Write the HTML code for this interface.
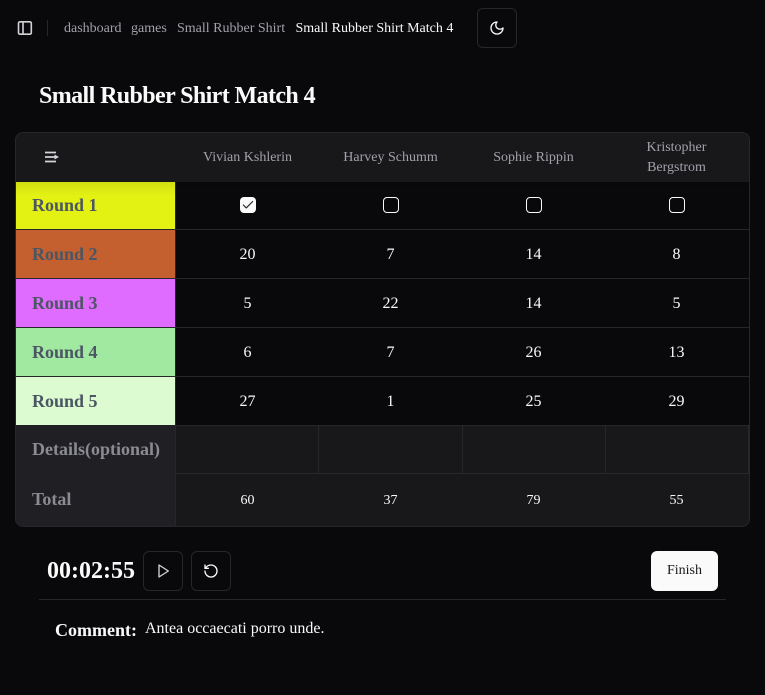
<!DOCTYPE html>
<html lang="en">
<head>
<meta charset="utf-8">
<title>Small Rubber Shirt Match 4</title>
<style>
html,body{margin:0;padding:0;background:#09090b;}
body{width:765px;height:695px;position:relative;overflow:hidden;font-family:"Liberation Serif",serif;color:#fafafa;}
.a{position:absolute;white-space:nowrap;}
.crumb{font-size:14px;line-height:20px;top:19px;color:#a1a1aa;}
.btn{position:absolute;box-sizing:border-box;width:40px;height:40px;border:1px solid #27272a;border-radius:6px;background:#09090b;}
.btn svg{position:absolute;left:11px;top:11px;}
.wrap{position:absolute;left:15px;top:132px;width:735px;height:395px;box-sizing:border-box;border:1px solid #27272a;border-radius:8px;overflow:hidden;background:#18181b;}
.r{position:absolute;left:0;width:733px;}
.lab{position:absolute;left:0;width:159px;height:100%;border-right:1px solid #27272a;box-sizing:content-box;font-weight:bold;font-size:18px;color:#4b5563;}
.lab span{position:absolute;left:16px;white-space:nowrap;}
.body{position:absolute;left:160px;right:0;top:0;height:100%;background:#09090b;}
.line{position:absolute;left:160px;right:0;height:1px;background:#27272a;}
.bl{position:absolute;left:0;width:160px;height:1px;background:#27272a;}
.num{position:absolute;font-size:16px;line-height:24px;text-align:center;width:60px;margin-left:-30px;}
.tot{position:absolute;font-size:14px;line-height:20px;text-align:center;width:60px;margin-left:-30px;}
.head{position:absolute;font-size:14px;line-height:20px;text-align:center;color:#a1a1aa;width:130px;margin-left:-65px;}
.cb{position:absolute;box-sizing:border-box;width:16px;height:16px;border:1px solid #fafafa;border-radius:4px;margin-left:-8px;}
.vs{position:absolute;width:1px;background:#27272a;top:293px;height:47px;}
.shade{position:absolute;left:0;right:0;top:49px;height:14px;background:linear-gradient(to bottom,rgba(0,0,0,.08),rgba(0,0,0,0));}
</style>
</head>
<body>
<svg class="a" style="left:17px;top:20px" width="16" height="16" viewBox="0 0 16 16" fill="none" stroke="#d4d4d8" stroke-width="1.600" stroke-linejoin="round"><rect x="1.500" y="1.800" width="12.800" height="12.400" rx="1.500"/><path d="M6 2v12"/></svg>
<div class="a" style="left:46.5px;top:20px;width:1px;height:16px;background:#27272a"></div>
<div class="a crumb" style="left:64px">dashboard</div>
<div class="a crumb" style="left:131px">games</div>
<div class="a crumb" style="left:177px">Small Rubber Shirt</div>
<div class="a crumb" style="left:295.500px;color:#fafafa">Small Rubber Shirt Match 4</div>
<div class="btn" style="left:477px;top:8px"><svg width="16" height="16" viewBox="0 0 24 24" fill="none" stroke="#fafafa" stroke-width="2" stroke-linecap="round" stroke-linejoin="round"><path d="M12 3a6 6 0 0 0 9 9 9 9 0 1 1-9-9Z"/></svg></div>

<div class="a" style="left:39px;top:82px;font-size:24px;line-height:28px;font-weight:bold;letter-spacing:-.6px">Small Rubber Shirt Match 4</div>

<div class="wrap">
  <svg class="a" style="left:28px;top:16px" width="16" height="16" viewBox="0 0 16 16" fill="none" stroke="#d4d4d8" stroke-width="1.700"><path d="M1 3.500h11M1 8h9.500M1 12.500h11"/><path d="M10.500 5.500 15 8l-4.500 2.500z" fill="#d4d4d8" stroke="none"/></svg>
  <div class="head" style="left:231.500px;top:15px">Vivian Kshlerin</div>
  <div class="head" style="left:374.500px;top:15px">Harvey Schumm</div>
  <div class="head" style="left:517.500px;top:15px">Sophie Rippin</div>
  <div class="head" style="left:660.500px;top:5px">Kristopher<br>Bergstrom</div>

  <div class="r" style="top:49px;height:48px"><div class="body"></div><div class="lab" style="background:#e3f213"><span style="top:13px">Round 1</span></div></div>
  <div class="r" style="top:97px;height:48px"><div class="body"></div><div class="lab" style="background:#c46030"><span style="top:14px">Round 2</span></div></div>
  <div class="r" style="top:146px;height:48px"><div class="body"></div><div class="lab" style="background:#e06bff"><span style="top:14px">Round 3</span></div></div>
  <div class="r" style="top:195px;height:48px"><div class="body"></div><div class="lab" style="background:#a1e8a1"><span style="top:14px">Round 4</span></div></div>
  <div class="r" style="top:244px;height:48px"><div class="body"></div><div class="lab" style="background:#dcfbd0"><span style="top:14px">Round 5</span></div></div>
  <div class="shade"></div>

  <div class="bl" style="top:96px"></div><div class="bl" style="top:145px"></div><div class="bl" style="top:194px"></div><div class="bl" style="top:243px"></div>
  <div class="line" style="top:96px"></div><div class="line" style="top:145px"></div><div class="line" style="top:194px"></div><div class="line" style="top:243px"></div><div class="line" style="top:292px"></div><div class="line" style="top:340px"></div>

  <div class="a" style="left:0;top:292px;width:159px;height:101px;background:#1f1f24;border-right:1px solid #27272a;font-weight:bold;font-size:18px;color:#8b8b92">
    <span class="a" style="left:16px;top:14px">Details(optional)</span>
    <span class="a" style="left:16px;top:64px">Total</span>
  </div>

  <div class="cb" style="left:231.500px;top:64px;background:#fafafa"><svg style="position:absolute;left:0;top:0" width="14" height="14" viewBox="0 0 24 24" fill="none" stroke="#27272a" stroke-width="2" stroke-linecap="round" stroke-linejoin="round"><path d="M20 6 9 17l-5-5"/></svg></div>
  <div class="cb" style="left:374.500px;top:64px"></div>
  <div class="cb" style="left:517.500px;top:64px"></div>
  <div class="cb" style="left:660.500px;top:64px"></div>

  <div class="num" style="left:231.500px;top:110px">20</div><div class="num" style="left:374.500px;top:110px">7</div><div class="num" style="left:517.500px;top:110px">14</div><div class="num" style="left:660.500px;top:110px">8</div>
  <div class="num" style="left:231.500px;top:159px">5</div><div class="num" style="left:374.500px;top:159px">22</div><div class="num" style="left:517.500px;top:159px">14</div><div class="num" style="left:660.500px;top:159px">5</div>
  <div class="num" style="left:231.500px;top:208px">6</div><div class="num" style="left:374.500px;top:208px">7</div><div class="num" style="left:517.500px;top:208px">26</div><div class="num" style="left:660.500px;top:208px">13</div>
  <div class="num" style="left:231.500px;top:257px">27</div><div class="num" style="left:374.500px;top:257px">1</div><div class="num" style="left:517.500px;top:257px">25</div><div class="num" style="left:660.500px;top:257px">29</div>

  <div class="vs" style="left:302px"></div><div class="vs" style="left:446px"></div><div class="vs" style="left:589px"></div><div class="vs" style="left:732px"></div>

  <div class="tot" style="left:231.500px;top:358px">60</div><div class="tot" style="left:374.500px;top:358px">37</div><div class="tot" style="left:517.500px;top:358px">79</div><div class="tot" style="left:660.500px;top:358px">55</div>
</div>

<div class="a" style="left:47px;top:557px;font-size:24px;line-height:28px;font-weight:bold">00:02:55</div>
<div class="btn" style="left:143px;top:551px"><svg width="16" height="16" viewBox="0 0 24 24" fill="none" stroke="#d4d4d8" stroke-width="2" stroke-linecap="round" stroke-linejoin="round"><path d="M6 3l14 9-14 9V3z"/></svg></div>
<div class="btn" style="left:191px;top:551px"><svg width="16" height="16" viewBox="0 0 24 24" fill="none" stroke="#fafafa" stroke-width="2" stroke-linecap="round" stroke-linejoin="round"><path d="M3 12a9 9 0 1 0 9-9 9.750 9.750 0 0 0-6.740 2.740L3 8"/><path d="M3 3v5h5"/></svg></div>
<div class="a" style="left:651px;top:551px;width:67px;height:40px;background:#fafafa;border-radius:6px;color:#18181b;font-size:14px;line-height:40px;text-align:center">Finish</div>
<div class="a" style="left:39px;top:599px;width:687px;height:1px;background:#27272a"></div>
<div class="a" style="left:55px;top:620px;font-size:18px;line-height:21px;font-weight:bold">Comment:</div>
<div class="a" style="left:145px;top:619px;font-size:16px;line-height:19px">Antea occaecati porro unde.</div>
</body>
</html>
